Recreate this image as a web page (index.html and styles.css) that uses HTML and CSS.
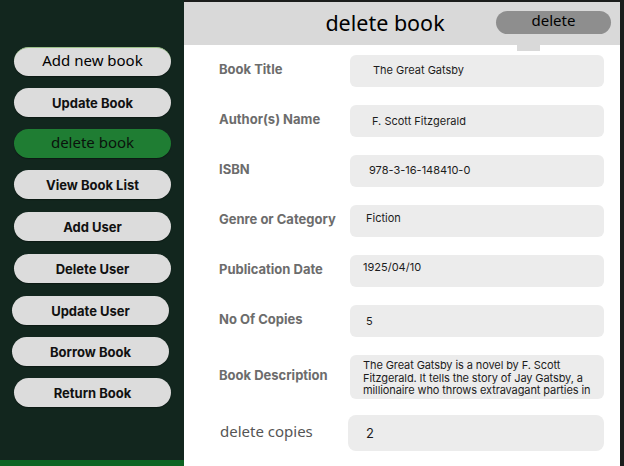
FILE: index.html
```html
<!DOCTYPE html>
<html>
<head>
<meta charset="utf-8">
<link rel="stylesheet" href="styles.css">
</head>
<body>
<div class="app">
  <aside class="sidebar">
    <nav class="menu">
      <button class="nav nav-first plain">Add new book</button>
      <button class="nav">Update Book</button>
      <button class="nav active plain">delete book</button>
      <button class="nav">View Book List</button>
      <button class="nav push">Add User</button>
      <button class="nav push">Delete User</button>
      <button class="nav push shift">Update User</button>
      <button class="nav shift">Borrow Book</button>
      <button class="nav">Return Book</button>
    </nav>
    <div class="footer-bar"></div>
  </aside>
  <main class="main">
    <header class="header">
      <h1 class="title">delete book</h1>
      <button class="delete-btn">delete</button>
      <span class="tab"></span>
    </header>
    <form class="form">
      <div class="row"><label class="label">Book Title</label><div class="field v-title">The Great Gatsby</div></div>
      <div class="row"><label class="label">Author(s) Name</label><div class="field v-author">F. Scott Fitzgerald</div></div>
      <div class="row"><label class="label">ISBN</label><div class="field v-isbn">978-3-16-148410-0</div></div>
      <div class="row"><label class="label">Genre or Category</label><div class="field v-genre">Fiction</div></div>
      <div class="row"><label class="label">Publication Date</label><div class="field v-date">1925/04/10</div></div>
      <div class="row"><label class="label">No Of Copies</label><div class="field v-copies">5</div></div>
      <div class="row row-desc"><label class="label">Book Description</label><div class="field desc">The Great Gatsby is a novel by F. Scott Fitzgerald. It tells the story of Jay Gatsby, a millionaire who throws extravagant parties in</div></div>
      <div class="row last"><label class="label light">delete copies</label><div class="field v-del">2</div></div>
    </form>
  </main>
</div>
</body>
</html>
```
FILE: styles.css
```css
* { box-sizing: border-box; }
html, body { margin: 0; padding: 0; }
body {
  width: 624px;
  height: 466px;
  overflow: hidden;
  background: #1b1d1c;
  font-family: "Inter", "Liberation Sans", sans-serif;
}
.app {
  display: flex;
  height: 466px;
  padding-top: 2px;
  padding-right: 4px;
}
.sidebar {
  width: 184px;
  flex: none;
  background: #12261e;
  display: flex;
  flex-direction: column;
  justify-content: space-between;
  margin-top: -2px;
}
.menu {
  display: flex;
  flex-direction: column;
  gap: 12px;
  padding: 47px 12px 0 14px;
}
.nav {
  width: 157px;
  height: 29px;
  border: none;
  border-radius: 15px;
  background: #dcdcdc;
  box-shadow: 0 1px 1px rgba(0,0,0,0.35);
  font-family: "Inter", "Liberation Sans", sans-serif;
  font-weight: 700;
  font-size: 13px;
  color: #111;
  padding: 0;
}
.nav.plain {
  font-family: "Noto Sans", "Open Sans", sans-serif;
  font-weight: 400;
  font-size: 15px;
  line-height: 1;
  color: #000;
  padding-bottom: 3px;
}
.nav-first { border-top: 1px solid #9cc08a; }
.nav.active { background: #1f7d33; color: #0a120c; }
.nav.shift { margin-left: -2px; }
.nav.push { margin-top: 1px; }
.footer-bar {
  height: 6px;
  background: #0c6322;
}
.main {
  flex: 1;
  background: #ffffff;
  display: flex;
  flex-direction: column;
}
.header {
  position: relative;
  height: 43px;
  background: #d9d9d9;
  display: flex;
  align-items: center;
  justify-content: center;
}
.title {
  margin: 0 34px 2px 0;
  font-family: "Noto Sans", "Open Sans", sans-serif;
  font-weight: 400;
  font-size: 21.5px;
  color: #000;
}
.delete-btn {
  position: absolute;
  left: 312px;
  top: 9px;
  width: 115px;
  height: 23px;
  border: none;
  border-radius: 12px;
  background: #8e8e8e;
  font-family: "Noto Sans", "Open Sans", sans-serif;
  font-size: 15px;
  line-height: 1;
  color: #000;
  padding: 0 0 4px 0;
}
.tab {
  position: absolute;
  left: 333px;
  top: 43px;
  width: 23px;
  height: 6px;
  background: #d9d9d9;
}
.form {
  display: flex;
  flex-direction: column;
  gap: 18px;
  padding: 10px 16px 0 35px;
}
.row {
  display: flex;
  align-items: center;
  height: 32px;
}
.label {
  width: 131px;
  flex: none;
  font-weight: 700;
  font-size: 13px;
  color: #6c6c6c;
  padding-bottom: 4px;
}
.label.light {
  font-family: "Noto Sans", "Open Sans", sans-serif;
  font-weight: 400;
  font-size: 15px;
  color: #555;
  padding-left: 1px;
  width: 129px;
}
.field {
  flex: 1;
  height: 100%;
  background: #ececec;
  border-radius: 6px;
  font-size: 11px;
  color: #1c1c1c;
  display: flex;
  align-items: center;
  padding-bottom: 3px;
}
.v-title { padding-left: 23px; }
.v-author { padding-left: 22px; padding-top: 2px; }
.v-isbn { padding-left: 19px; }
.v-genre { padding-left: 16px; align-items: flex-start; padding-top: 6px; }
.v-date { padding-left: 13px; align-items: flex-start; padding-top: 5px; }
.v-copies { padding-left: 16px; padding-top: 2px; }
.row.row-desc { height: 44px; }
.desc {
  display: block;
  padding: 4px 6px 0 13px;
  line-height: 12.5px;
  letter-spacing: -0.1px;
}
.row.last { height: 36px; margin-top: -2px; }
.v-del {
  padding-left: 18px;
  font-size: 13px;
  border-radius: 8px;
  padding-top: 3px;
}
```
